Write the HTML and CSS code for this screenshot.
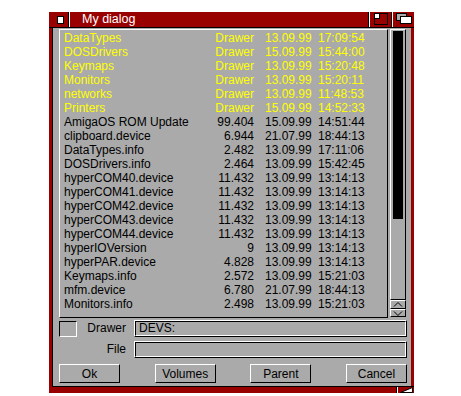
FILE: index.html
```html
<!DOCTYPE html>
<html lang="en">
<head>
    <meta charset="UTF-8">
    <title>My dialog</title>
    <link rel="stylesheet" href="styles.css">
</head>
<body>
    <div class="window">
        <!-- Title bar -->
        <div class="titlebar">
            <div class="close"><span class="close-box"></span></div>
            <div class="title">My dialog</div>
            <div class="gad">
                <svg width="22" height="15" viewBox="0 0 22 15">
                    <rect x="5.5" y="1.5" width="13" height="11" fill="none" stroke="#000"/>
                    <rect x="6" y="2" width="4" height="4" fill="#fff"/>
                    <path d="M10.5 2v5M6 6.5h5" stroke="#000"/>
                </svg>
            </div>
            <div class="gad">
                <svg width="22" height="15" viewBox="0 0 22 15">
                    <rect x="4.5" y="1.5" width="10" height="7" fill="#aaa" stroke="#000"/>
                    <rect x="8.5" y="4.5" width="11" height="7" fill="#fff" stroke="#000"/>
                </svg>
            </div>
        </div>

        <div class="inner">
            <!-- File list -->
            <div class="browser">
                <div class="list">
                    <div class="entry dir"><span>DataTypes</span><span class="size">Drawer</span><span class="date">13.09.99</span><span>17:09:54</span></div>
                    <div class="entry dir"><span>DOSDrivers</span><span class="size">Drawer</span><span class="date">15.09.99</span><span>15:44:00</span></div>
                    <div class="entry dir"><span>Keymaps</span><span class="size">Drawer</span><span class="date">13.09.99</span><span>15:20:48</span></div>
                    <div class="entry dir"><span>Monitors</span><span class="size">Drawer</span><span class="date">13.09.99</span><span>15:20:11</span></div>
                    <div class="entry dir"><span>networks</span><span class="size">Drawer</span><span class="date">13.09.99</span><span>11:48:53</span></div>
                    <div class="entry dir"><span>Printers</span><span class="size">Drawer</span><span class="date">15.09.99</span><span>14:52:33</span></div>
                    <div class="entry"><span>AmigaOS ROM Update</span><span class="size">99.404</span><span class="date">15.09.99</span><span>14:51:44</span></div>
                    <div class="entry"><span>clipboard.device</span><span class="size">6.944</span><span class="date">21.07.99</span><span>18:44:13</span></div>
                    <div class="entry"><span>DataTypes.info</span><span class="size">2.482</span><span class="date">13.09.99</span><span>17:11:06</span></div>
                    <div class="entry"><span>DOSDrivers.info</span><span class="size">2.464</span><span class="date">13.09.99</span><span>15:42:45</span></div>
                    <div class="entry"><span>hyperCOM40.device</span><span class="size">11.432</span><span class="date">13.09.99</span><span>13:14:13</span></div>
                    <div class="entry"><span>hyperCOM41.device</span><span class="size">11.432</span><span class="date">13.09.99</span><span>13:14:13</span></div>
                    <div class="entry"><span>hyperCOM42.device</span><span class="size">11.432</span><span class="date">13.09.99</span><span>13:14:13</span></div>
                    <div class="entry"><span>hyperCOM43.device</span><span class="size">11.432</span><span class="date">13.09.99</span><span>13:14:13</span></div>
                    <div class="entry"><span>hyperCOM44.device</span><span class="size">11.432</span><span class="date">13.09.99</span><span>13:14:13</span></div>
                    <div class="entry"><span>hyperIOVersion</span><span class="size">9</span><span class="date">13.09.99</span><span>13:14:13</span></div>
                    <div class="entry"><span>hyperPAR.device</span><span class="size">4.828</span><span class="date">13.09.99</span><span>13:14:13</span></div>
                    <div class="entry"><span>Keymaps.info</span><span class="size">2.572</span><span class="date">13.09.99</span><span>15:21:03</span></div>
                    <div class="entry"><span>mfm.device</span><span class="size">6.780</span><span class="date">21.07.99</span><span>18:44:13</span></div>
                    <div class="entry"><span>Monitors.info</span><span class="size">2.498</span><span class="date">13.09.99</span><span>15:21:03</span></div>
                </div>
                <div class="scroller">
                    <div class="track"><div class="knob"></div></div>
                    <div class="arrow up">
                        <svg width="14" height="7" viewBox="0 0 14 7"><path d="M3 5.5l4-4 4 4" fill="none" stroke="#000"/></svg>
                    </div>
                    <div class="arrow down">
                        <svg width="14" height="6" viewBox="0 0 14 6"><path d="M3 1.5l4 4 4-4" fill="none" stroke="#000"/></svg>
                    </div>
                </div>
            </div>

            <!-- Path fields -->
            <div class="field-row">
                <div class="label"><span class="checkbox"></span><span>Drawer</span></div>
                <div class="field"><div class="field-in">DEVS:</div></div>
            </div>
            <div class="field-row">
                <div class="label only">File</div>
                <div class="field"><div class="field-in"></div></div>
            </div>

            <!-- Buttons -->
            <div class="buttons">
                <button>Ok</button>
                <button>Volumes</button>
                <button>Parent</button>
                <button>Cancel</button>
            </div>
        </div>

        <div class="bottom">
            <div class="sizer">
                <svg width="17" height="6" viewBox="0 0 17 6"><path d="M3.5 5.5L15.5 0.5V5.5Z" fill="#fff" stroke="#000" stroke-width="1"/></svg>
            </div>
        </div>
    </div>
</body>
</html>
```

FILE: styles.css
```css
body {
    margin: 0;
    padding: 0;
    background-color: #fff;
    font-family: "Liberation Sans", Arial, sans-serif;
    font-size: 12px;
}

.window {
    width: 365px;
    margin: 12px 0 0 49px;
    background-color: #990000;
}

/* title bar */
.titlebar {
    display: flex;
    height: 15px;
    border-bottom: 1px solid #000;
    color: #fff;
}

.close {
    width: 19px;
    border-right: 1px solid #000;
    display: flex;
    align-items: center;
    padding-left: 8px;
    box-sizing: border-box;
    width: 20px;
}

.close-box {
    width: 5px;
    height: 6px;
    background-color: #fff;
    border: 1px solid #000;
}

.title {
    flex: 1;
    border-left: 1px solid #fff;
    padding-left: 12px;
    line-height: 15px;
    font-size: 12.5px;
}

.gad {
    width: 22px;
    border-left: 1px solid #000;
    box-shadow: inset 1px 0 0 #fff;
}

.gad svg {
    display: block;
}

/* window body */
.inner {
    margin-left: 3px;
    margin-right: 3px;
    border-left: 1px solid #000;
    background-color: #aaa;
    padding: 1px 4px 3px 6px;
}

.browser {
    display: flex;
    gap: 2px;
}

.list {
    width: 327px;
    height: 287px;
    border: 1px solid;
    border-color: #fff #000 #000 #fff;
    overflow: hidden;
    padding-top: 1px;
    box-sizing: content-box;
    height: 286px;
}

.entry {
    display: grid;
    grid-template-columns: 140px 50px 64px 1fr;
    height: 14px;
    line-height: 14px;
    padding-left: 4px;
    color: #000;
    white-space: nowrap;
}

.entry.dir {
    color: #ffff00;
}

.entry .size {
    text-align: right;
}

.entry .date {
    padding-left: 11px;
}

.scroller {
    width: 16px;
    height: 288px;
    display: flex;
    flex-direction: column;
}

.track {
    flex: 1;
    border: 1px solid;
    border-color: #fff #000 #000 #fff;
    padding: 1px 2px 0 2px;
}

.knob {
    width: 10px;
    height: 188px;
    background-color: #000;
}

.arrow {
    border: 1px solid;
    border-color: #fff #000 #000 #fff;
}

.arrow svg {
    display: block;
}

.arrow.up {
    height: 7px;
}

.arrow.down {
    height: 6px;
}

/* drawer / file fields */
.field-row {
    display: flex;
    height: 17px;
    margin-top: 2px;
}

.field-row + .field-row {
    margin-top: 4px;
}

.label {
    width: 67px;
    display: flex;
    justify-content: space-between;
    align-items: center;
    line-height: 17px;
}

.label.only {
    justify-content: flex-end;
}

.checkbox {
    width: 16px;
    height: 14px;
    border: 1px solid;
    border-color: #000 #fff #fff #000;
}

.field {
    flex: 1;
    margin-left: 8px;
    border: 1px solid;
    border-color: #fff #000 #000 #fff;
}

.field-in {
    height: 13px;
    border: 1px solid;
    border-color: #000 #fff #fff #000;
    padding-left: 3px;
    line-height: 13px;
}

/* buttons */
.buttons {
    display: flex;
    justify-content: space-between;
    margin-top: 6px;
}

button {
    width: 61px;
    height: 19px;
    padding: 0;
    font-family: "Liberation Sans", Arial, sans-serif;
    font-size: 12px;
    color: #000;
    background-color: #aaa;
    border: 1px solid;
    border-color: #fff #000 #000 #fff;
    border-radius: 0;
}

/* bottom border with size gadget */
.bottom {
    height: 6px;
    border-top: 1px solid #000;
    margin-left: 3px;
    display: flex;
    justify-content: flex-end;
}

.sizer {
    width: 17px;
    border-left: 1px solid #000;
    box-shadow: inset 1px 0 0 #fff;
}

.sizer svg {
    display: block;
}
```
